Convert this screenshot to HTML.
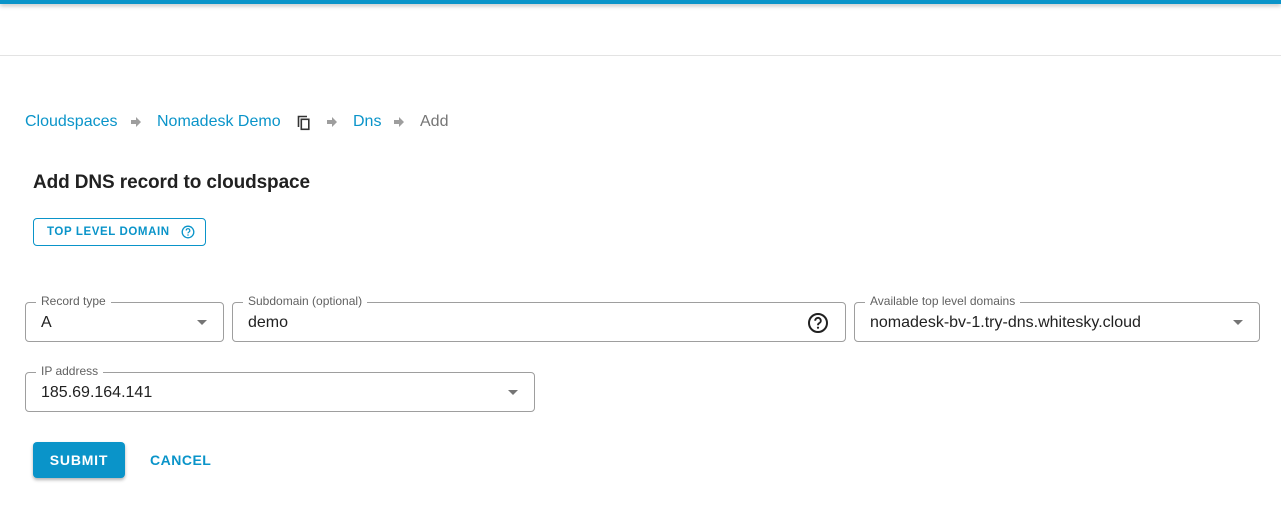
<!DOCTYPE html>
<html><head><meta charset="utf-8"><style>
*{margin:0;padding:0;box-sizing:border-box}
body{width:1281px;height:510px;background:#fff;font-family:"Liberation Sans",Arial,sans-serif;position:relative;overflow:hidden;color:#212121}
.a{position:absolute}
.bar{left:0;top:0;width:1281px;height:4px;background:#0a94c9;box-shadow:0 2px 4px rgba(0,0,0,.25)}
.line{left:0;top:55px;width:1281px;height:1px;background:#e3e3e3}
.bc{top:112px;font-size:16px;line-height:20px;color:#0a94c9}
.arr{top:117px;width:12px;height:10px}
.f{border:1px solid #9e9e9e;border-radius:4px;height:40px}
.lab{position:absolute;top:-9px;left:10px;background:#fff;padding:0 5px;font-size:12px;color:#616161;line-height:14px}
.val{position:absolute;left:15px;top:10px;font-size:16px;line-height:20px;color:#212121}
.dd{position:absolute;right:16px;top:17px;width:0;height:0;border-left:5px solid transparent;border-right:5px solid transparent;border-top:5px solid #757575}
</style></head><body>
<div class="a bar"></div>
<div class="a line"></div>

<div class="a bc" style="left:25px">Cloudspaces</div>
<svg class="a arr" style="left:130px" viewBox="0 0 12 10"><path d="M1 3h5V0l5 5-5 5V7H1z" fill="#9e9e9e"/></svg>
<div class="a bc" style="left:157px">Nomadesk Demo</div>
<svg class="a" style="left:297px;top:115px" width="14" height="16" viewBox="0 0 14 16"><path d="M1.5 12V1.5H10" fill="none" stroke="#333" stroke-width="1.6"/><rect x="4.3" y="4.3" width="7.5" height="10" fill="none" stroke="#333" stroke-width="1.6"/></svg>
<svg class="a arr" style="left:326px" viewBox="0 0 12 10"><path d="M1 3h5V0l5 5-5 5V7H1z" fill="#9e9e9e"/></svg>
<div class="a bc" style="left:353px">Dns</div>
<svg class="a arr" style="left:393px" viewBox="0 0 12 10"><path d="M1 3h5V0l5 5-5 5V7H1z" fill="#9e9e9e"/></svg>
<div class="a bc" style="left:420px;color:#757575">Add</div>

<div class="a" style="left:33px;top:171px;font-size:19px;line-height:24px;font-weight:bold;color:#212121;letter-spacing:-0.1px">Add DNS record to cloudspace</div>

<div class="a" style="left:33px;top:218px;width:173px;height:28px;border:1px solid #0a94c9;border-radius:4px;color:#0a94c9;font-size:11.5px;font-weight:bold;letter-spacing:0.6px;line-height:26px;padding-left:13px">TOP LEVEL DOMAIN
<svg style="position:absolute;left:147px;top:6px" width="14" height="14" viewBox="0 0 14 14"><circle cx="7" cy="7" r="5.8" fill="none" stroke="#0a94c9" stroke-width="1.3"/><path d="M5.2 5.5a1.8 1.8 0 1 1 2.6 1.6c-.6.3-.8.6-.8 1.3" fill="none" stroke="#0a94c9" stroke-width="1.2"/><circle cx="7" cy="10" r=".75" fill="#0a94c9"/></svg></div>

<div class="a f" style="left:25px;top:302px;width:199px"><span class="lab">Record type</span><span class="val">A</span><span class="dd"></span></div>
<div class="a f" style="left:232px;top:302px;width:614px"><span class="lab">Subdomain (optional)</span><span class="val">demo</span>
<svg style="position:absolute;right:16px;top:9px" width="22" height="22" viewBox="0 0 22 22"><circle cx="11" cy="11" r="9" fill="none" stroke="#212121" stroke-width="2"/><path d="M8.2 8.7a2.8 2.8 0 1 1 4 2.5c-.9.5-1.2 1-1.2 2" fill="none" stroke="#212121" stroke-width="1.9"/><circle cx="11" cy="15.7" r="1.1" fill="#212121"/></svg></div>
<div class="a f" style="left:854px;top:302px;width:406px"><span class="lab">Available top level domains</span><span class="val">nomadesk-bv-1.try-dns.whitesky.cloud</span><span class="dd"></span></div>

<div class="a f" style="left:25px;top:372px;width:510px"><span class="lab">IP address</span><span class="val">185.69.164.141</span><span class="dd"></span></div>

<div class="a" style="left:33px;top:442px;width:92px;height:36px;background:#0a94c9;border-radius:4px;box-shadow:0 2px 3px rgba(0,0,0,.3);color:#fff;font-size:14px;font-weight:bold;letter-spacing:0.8px;line-height:36px;text-align:center">SUBMIT</div>
<div class="a" style="left:150px;top:442px;line-height:36px;color:#0a94c9;font-size:14px;font-weight:bold;letter-spacing:0.5px">CANCEL</div>
</body></html>
